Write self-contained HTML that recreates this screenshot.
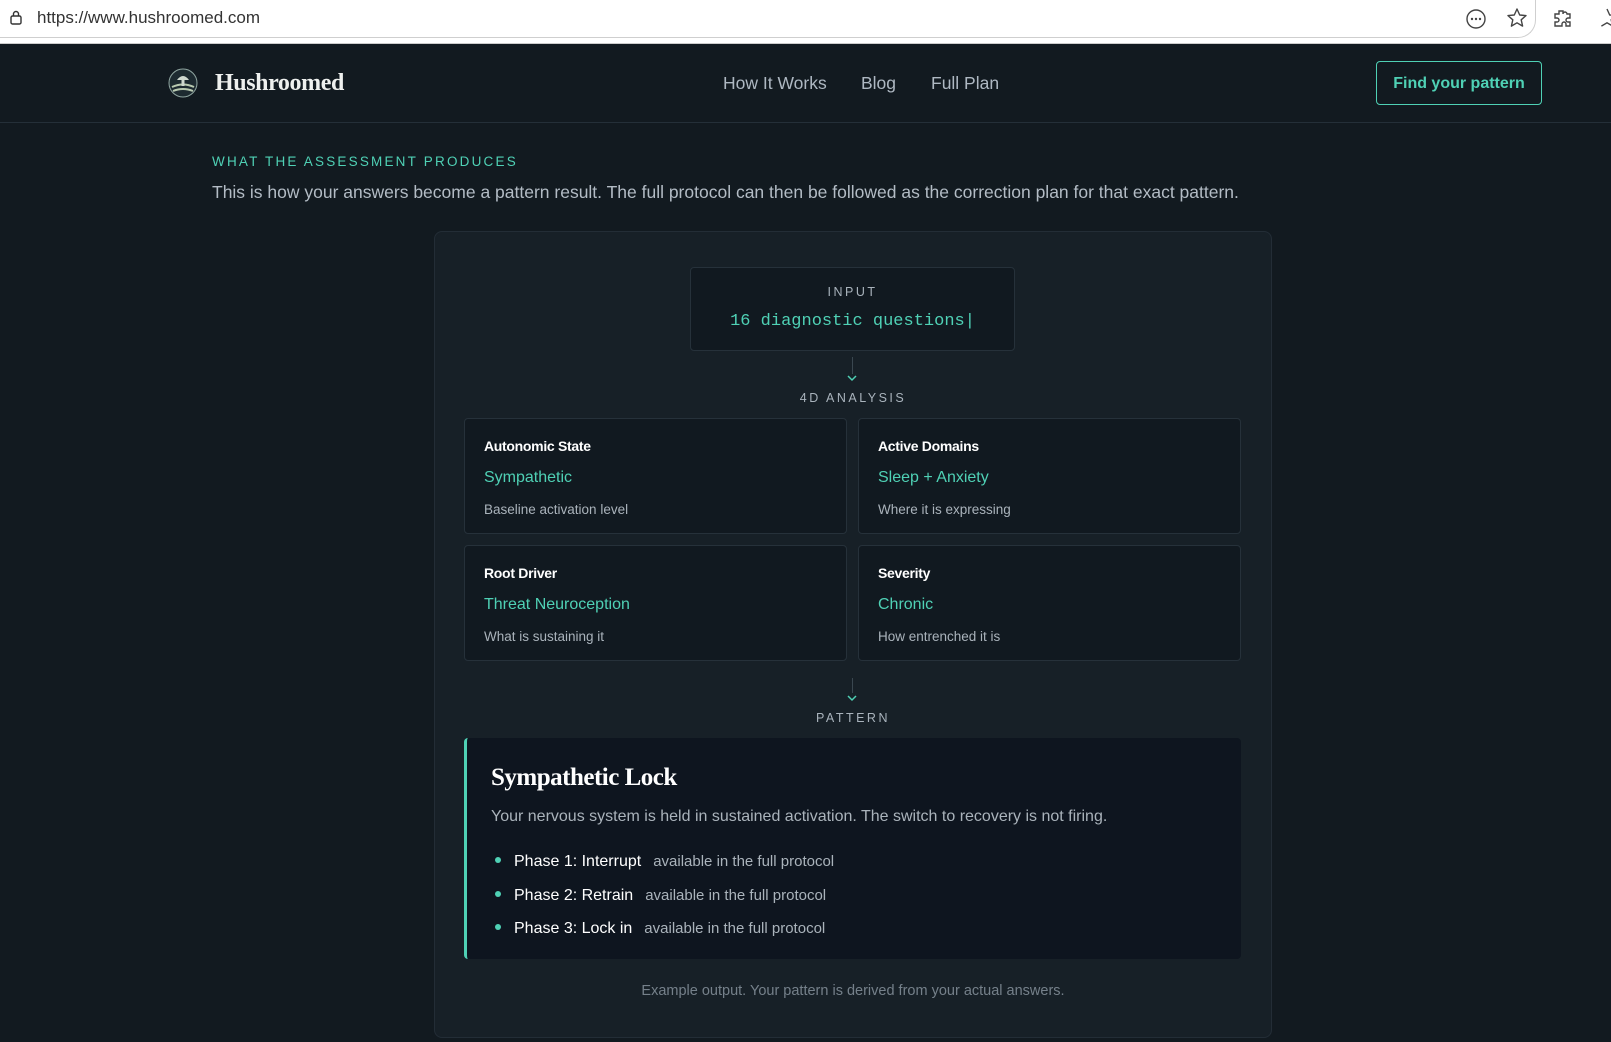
<!DOCTYPE html>
<html><head><meta charset="utf-8"><style>
*{margin:0;padding:0;box-sizing:border-box}
body{width:1611px;height:1042px;overflow:hidden;background:#121a20;font-family:"Liberation Sans",sans-serif;position:relative;color:#cfd6dc}
.abs{position:absolute;white-space:nowrap}
.bar{position:absolute;left:0;top:0;width:1611px;height:44px;background:#fff;border-bottom:1px solid #ccc}
.url{position:absolute;left:0;top:0;width:1536px;height:38px;border:1px solid #cfcfcf;border-top:none;border-left:none;border-radius:0 0 18px 0;background:#fff}
.hdr{position:absolute;left:0;top:44px;width:1611px;height:79px;background:#121a20;border-bottom:1px solid #242f38}
.teal{color:#4fd1b5}
.card{position:absolute;left:434px;top:231px;width:838px;height:807px;background:#172027;border:1px solid #232d36;border-radius:8px}
.cell{position:absolute;width:383px;height:116px;background:#111920;border:1px solid #26313a;border-radius:4px}
.cell .t{position:absolute;left:19px;top:19px;font-weight:bold;font-size:14px;color:#fff;letter-spacing:-0.3px}
.cell .v{position:absolute;left:19px;top:50px;font-size:16px;color:#4fd1b5}
.cell .d{position:absolute;left:19px;top:83px;font-size:13.5px;color:#aab3bb}
.lbl{font-size:12.5px;letter-spacing:2.5px;color:#a9b3bc}
.ph{position:absolute;left:495px;font-size:16px;color:#fff}
.ph i{display:inline-block;width:6px;height:6px;border-radius:50%;background:#4fd1b5;margin-right:13px;vertical-align:3px}
.ph span{color:#aab3bb;font-size:15px;margin-left:12px}
</style></head><body>
<div class="bar"><div class="url"></div>
<svg class="abs" style="left:9px;top:10px" width="14" height="16" viewBox="0 0 14 16"><rect x="2" y="6" width="10" height="8" rx="1.5" fill="none" stroke="#333" stroke-width="1.4"/><path d="M4.5 6V4a2.5 2.5 0 0 1 5 0v2" fill="none" stroke="#333" stroke-width="1.4"/></svg>
<div class="abs" style="left:37px;top:8px;font-size:17px;color:#333">https://www.hushroomed.com</div>
<svg class="abs" style="left:1465px;top:8px" width="22" height="22" viewBox="0 0 22 22"><circle cx="11" cy="11" r="9" fill="none" stroke="#444" stroke-width="1.4"/><circle cx="7" cy="11" r="1.2" fill="#444"/><circle cx="11" cy="11" r="1.2" fill="#444"/><circle cx="15" cy="11" r="1.2" fill="#444"/></svg>
<svg class="abs" style="left:1506px;top:7px" width="22" height="22" viewBox="0 0 22 22"><path d="M11 2l2.7 6 6.3.6-4.8 4.2 1.4 6.3L11 15.8 5.4 19.1l1.4-6.3L2 8.6 8.3 8z" fill="none" stroke="#444" stroke-width="1.4" stroke-linejoin="round"/></svg>
<svg class="abs" style="left:1551px;top:7px" width="22" height="22" viewBox="0 0 22 22"><path d="M8 4h4v3a2 2 0 0 1 4 0V7h3v4h-2a2 2 0 0 0 0 4h2v4h-4v-2a2 2 0 0 0-4 0v2H4v-4h2a2 2 0 0 0 0-4H4V7h4z" fill="none" stroke="#444" stroke-width="1.4"/></svg>
<svg class="abs" style="left:1598px;top:7px" width="14" height="22" viewBox="0 0 14 22"><path d="M9 2l2.7 6 6.3.6-4.8 4.2 1.4 6.3L9 15.8 3.4 19.1" fill="none" stroke="#444" stroke-width="1.4"/></svg>
</div>
<div class="hdr"></div>
<svg class="abs" style="left:168px;top:68px" width="30" height="30" viewBox="0 0 30 30"><circle cx="15" cy="15" r="14" fill="#1d2a30" stroke="#8fa5a0"/><path d="M4 19q11-5 22 0M5 23q10-4 20 0" stroke="#b8c9b0" stroke-width="2" fill="none"/><path d="M9 12q6-8 12 0z" fill="#cfd8cf"/><rect x="13.5" y="12" width="3" height="6" fill="#cfd8cf"/></svg>
<div class="abs" style="left:215px;top:70px;font-family:'Liberation Serif',serif;font-weight:bold;font-size:24px;color:#eef0ee;letter-spacing:-0.4px">Hushroomed</div>
<div class="abs" style="left:723px;top:73px;font-size:17.5px;color:#aeb8c2">How It Works</div>
<div class="abs" style="left:861px;top:73px;font-size:17.5px;color:#aeb8c2">Blog</div>
<div class="abs" style="left:931px;top:73px;font-size:17.5px;color:#aeb8c2">Full Plan</div>
<div class="abs" style="left:1376px;top:61px;width:166px;height:44px;border:1.5px solid #4fd1b5;border-radius:4px;color:#4fd1b5;font-weight:bold;font-size:16px;text-align:center;line-height:43px">Find your pattern</div>
<div class="abs teal" style="left:212px;top:154px;font-size:13.5px;letter-spacing:2.2px">WHAT THE ASSESSMENT PRODUCES</div>
<div class="abs" style="left:212px;top:182px;font-size:17.5px;color:#b3bcc5">This is how your answers become a pattern result. The full protocol can then be followed as the correction plan for that exact pattern.</div>
<div class="card"></div>
<div class="abs" style="left:690px;top:267px;width:325px;height:84px;background:#111920;border:1px solid #26313a;border-radius:4px"></div>
<div class="abs lbl" style="left:690px;width:325px;text-align:center;top:285px">INPUT</div>
<div class="abs teal" style="left:690px;width:325px;text-align:center;top:312px;font-family:'Liberation Mono',monospace;font-size:17px">16 diagnostic questions<span style="color:#4fd1b5">|</span></div>
<div class="abs" style="left:852px;top:357px;width:1px;height:17px;background:#3a4750"></div>
<svg class="abs" style="left:846px;top:374px" width="12" height="8" viewBox="0 0 12 8"><path d="M2 2l4 4 4-4" stroke="#4fd1b5" stroke-width="1.5" fill="none"/></svg>
<div class="abs lbl" style="left:434px;width:838px;text-align:center;top:391px">4D ANALYSIS</div>
<div class="cell" style="left:464px;top:418px"><div class="t">Autonomic State</div><div class="v">Sympathetic</div><div class="d">Baseline activation level</div></div>
<div class="cell" style="left:858px;top:418px"><div class="t">Active Domains</div><div class="v">Sleep + Anxiety</div><div class="d">Where it is expressing</div></div>
<div class="cell" style="left:464px;top:545px"><div class="t">Root Driver</div><div class="v">Threat Neuroception</div><div class="d">What is sustaining it</div></div>
<div class="cell" style="left:858px;top:545px"><div class="t">Severity</div><div class="v">Chronic</div><div class="d">How entrenched it is</div></div>
<div class="abs" style="left:852px;top:678px;width:1px;height:15px;background:#3a4750"></div>
<svg class="abs" style="left:846px;top:694px" width="12" height="8" viewBox="0 0 12 8"><path d="M2 2l4 4 4-4" stroke="#4fd1b5" stroke-width="1.5" fill="none"/></svg>
<div class="abs lbl" style="left:434px;width:838px;text-align:center;top:711px">PATTERN</div>
<div class="abs" style="left:464px;top:738px;width:777px;height:221px;background:#0e151f;border-left:3px solid #4fd1b5;border-radius:4px"></div>
<div class="abs" style="left:491px;top:764px;font-family:'Liberation Serif',serif;font-weight:bold;font-size:25px;color:#fff;letter-spacing:-0.5px">Sympathetic Lock</div>
<div class="abs" style="left:491px;top:808px;font-size:16px;color:#aab3bb">Your nervous system is held in sustained activation. The switch to recovery is not firing.</div>
<div class="abs ph" style="top:853px"><i></i>Phase 1: Interrupt<span>available in the full protocol</span></div>
<div class="abs ph" style="top:887px"><i></i>Phase 2: Retrain<span>available in the full protocol</span></div>
<div class="abs ph" style="top:920px"><i></i>Phase 3: Lock in<span>available in the full protocol</span></div>
<div class="abs" style="left:434px;width:838px;text-align:center;top:983px;font-size:14.5px;color:#75808a">Example output. Your pattern is derived from your actual answers.</div>
</body></html>
